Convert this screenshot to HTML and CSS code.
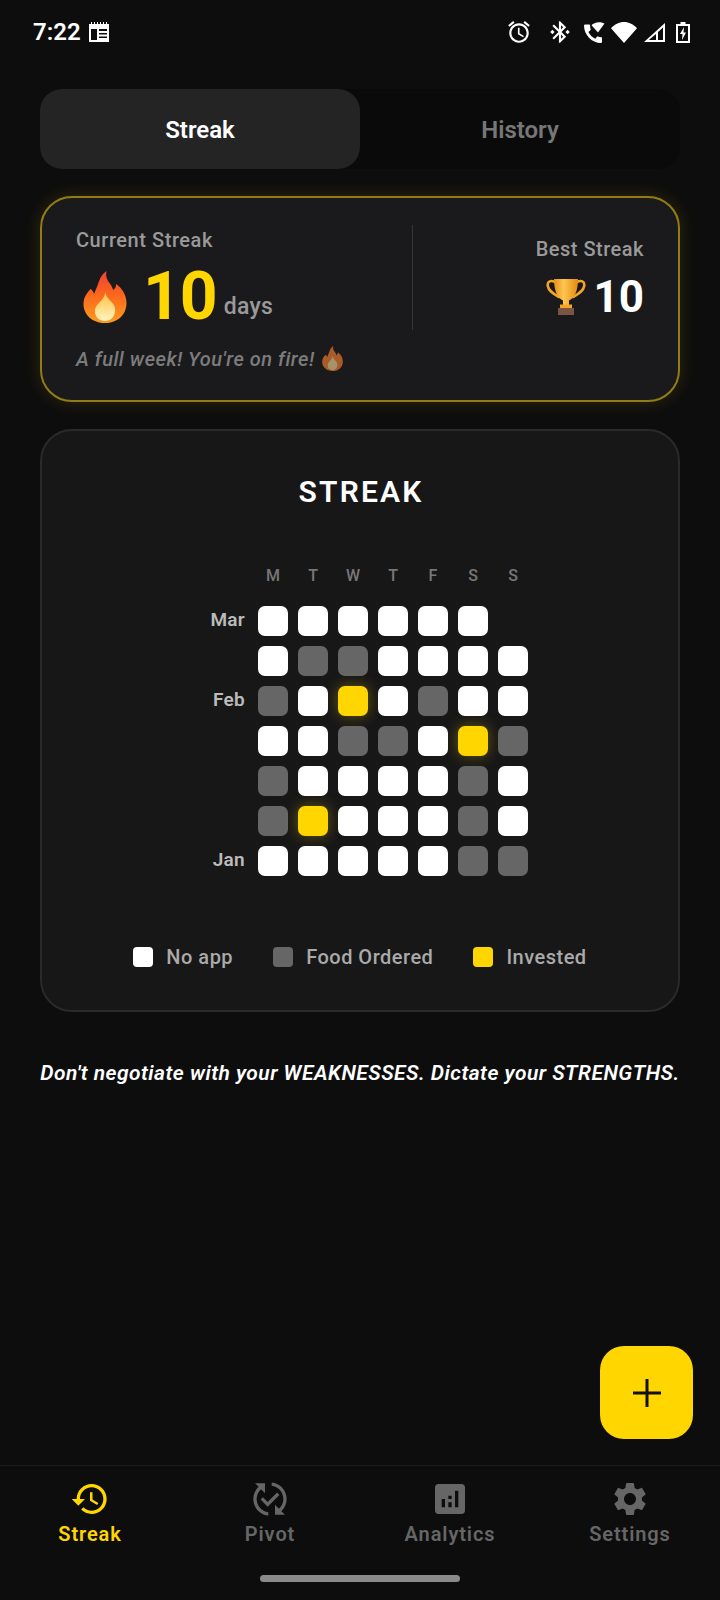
FILE: index.html
```html
<!DOCTYPE html>
<html lang="en">
<head>
<meta charset="utf-8">
<title>Streak</title>
<link rel="stylesheet" href="styles.css">
</head>
<body>
<div class="app">
  <header class="status">
    <div class="status-left">
      <span class="time">7:22</span>
      <svg class="cal" viewBox="0 0 22 20"><path fill="#fff" d="M1 2h2V0h1v2h2V0h1v2h2V0h1v2h2V0h1v2h2V0h1v2h2V0h1v2h2v18H1zM3 7v11h6V7zm8 0v2h8V7zm0 4v1.500h8V11zm0 3.500V16h8v-1.500z"/></svg>
    </div>
    <div class="status-right">
      <svg class="si si-alarm" viewBox="0 0 24 24"><path d="M22 5.720l-4.600-3.860-1.290 1.530 4.600 3.860L22 5.720zM7.880 3.390L6.600 1.860 2 5.710l1.290 1.530 4.590-3.850zM12.500 8H11v6l4.750 2.850.75-1.230-4-2.370V8zM12 4c-4.970 0-9 4.030-9 9s4.020 9 9 9c4.970 0 9-4.030 9-9s-4.030-9-9-9zm0 16c-3.870 0-7-3.130-7-7s3.130-7 7-7 7 3.130 7 7-3.130 7-7 7z"/></svg>
      <svg class="si si-bt" viewBox="0 0 24 24"><path d="M7 12l-2-2-2 2 2 2 2-2zm10.710-4.290L12 2h-1v7.590L6.410 5 5 6.410 10.590 12 5 17.590 6.410 19 11 14.410V22h1l5.710-5.710-4.300-4.290 4.300-4.290zM13 5.830l1.880 1.880L13 9.590V5.830zm1.880 10.460L13 18.170v-3.760l1.880 1.880zM19 10l-2 2 2 2 2-2-2-2z"/></svg>
      <svg class="si si-call" viewBox="0 0 24 24"><path d="M20.500 17.200c-1.300 0-2.500-.2-3.600-.6-.35-.12-.74-.03-1 .24l-1.600 1.900c-2.800-1.400-5.500-3.900-6.900-6.800l2-1.700c.27-.28.35-.67.24-1.020C9.300 8 9.100 6.800 9.100 5.500c0-.54-.45-1-1-1H4.600C4 4.500 3 4.700 3 5.500 3 14.800 10.700 23 20 23c.7 0 1-.6 1-1.200v-3.600c0-.55-.45-1-.5-1z"/><path d="M10.500 5.200C13 2.500 18 .8 23.500 3.500L17 12.500z"/></svg>
      <svg class="si si-wifi" viewBox="0 0 26 21"><path d="M13 21L0 6.200C3.500 2.500 8 0 13 0s9.500 2.500 13 6.200z"/></svg>
      <svg class="si si-signal" viewBox="0 0 21 19"><path d="M21 0L0 19h21zM19 4.500V17h-5V9z M12 11v6H4.800z"/></svg>
      <svg class="si si-batt" viewBox="0 0 14 21"><path fill-rule="evenodd" d="M4.500 0h5v2H14v19H0V2h4.500zM2 4v15h10V4zm6 1L4 12h2.500L6 18l4-7.500H7.500z"/></svg>
    </div>
  </header>

  <main class="main">
    <div class="tabs">
      <div class="tab tab-active">Streak</div>
      <div class="tab">History</div>
    </div>

    <section class="hero">
      <div class="hero-top">
        <div class="hero-left">
          <div class="hero-label">Current Streak</div>
          <div class="hero-count">
            <svg class="flame" viewBox="0 0 43 52">
              <defs>
                <linearGradient id="flameOuter" x1="0" y1="0" x2="0" y2="1">
                  <stop offset="0" stop-color="#ef4136"/>
                  <stop offset=".4" stop-color="#f9621f"/>
                  <stop offset="1" stop-color="#ff9c1c"/>
                </linearGradient>
                <linearGradient id="flameInner" x1="0" y1="0" x2="0" y2="1">
                  <stop offset="0" stop-color="#ffb93d"/>
                  <stop offset=".6" stop-color="#ffdf8a"/>
                  <stop offset="1" stop-color="#fff3c4"/>
                </linearGradient>
              </defs>
              <path fill="url(#flameOuter)" d="M23 0c-1 5 .5 9 3 12 1.500 2 3 4 3.500 7 2-1 3-3 3.200-6C38.500 17 43 24 43 32c0 12-9 20-21.500 20S0 44 0 33c0-7 3.500-11 7-15 2 1 3 3 3.500 5C13 17 15 12 16 9c1.500-4 4-7 7-9z"/>
              <path fill="url(#flameInner)" d="M22 20c0 5 2.500 7.500 6 11 3 3 4 6 3.500 9.500C31 46 27 50 21.500 50S12 46.500 11.500 41c-.3-3.500 1-6 3.500-8.500 3-3 6.500-6.500 7-12.500z"/>
            </svg>
            <span class="count-num">10</span>
            <span class="count-unit">days</span>
          </div>
        </div>
        <div class="hero-divider"></div>
        <div class="hero-right">
          <div class="best-label">Best Streak</div>
          <div class="best-count">
            <svg class="trophy" viewBox="0 0 40 38">
              <defs>
                <linearGradient id="cup" x1="0" y1="0" x2="1" y2="0">
                  <stop offset="0" stop-color="#e8911a"/>
                  <stop offset=".4" stop-color="#ffc650"/>
                  <stop offset="1" stop-color="#e48a14"/>
                </linearGradient>
              </defs>
              <path fill="none" stroke="#f2a527" stroke-width="2.600" stroke-linecap="round" d="M9 4C5 2 1 3 1.800 8c.7 5 6 8 11 11M31 4c4-2 8-1 7.200 4-.7 5-6 8-11 11"/>
              <path fill="url(#cup)" d="M8 1h24c0 11-3 19-9 21.500V27h-6v-4.500C11 20 8 12 8 1z"/>
              <path fill="#f2a527" d="M14 26.500h12V30H14z"/>
              <path fill="#7b5544" d="M12 30h16v7H12z"/>
            </svg>
            <span class="best-num">10</span>
          </div>
        </div>
      </div>
      <p class="hero-note">A full week! You're on fire! <svg class="flame-small" viewBox="0 0 43 52"><path fill="#a85c2a" d="M23 0c-1 5 .5 9 3 12 1.500 2 3 4 3.500 7 2-1 3-3 3.200-6C38.500 17 43 24 43 32c0 12-9 20-21.500 20S0 44 0 33c0-7 3.500-11 7-15 2 1 3 3 3.500 5C13 17 15 12 16 9c1.500-4 4-7 7-9z"/><path fill="#a8926a" d="M22 20c0 5 2.500 7.500 6 11 3 3 4 6 3.500 9.500C31 46 27 50 21.500 50S12 46.500 11.500 41c-.3-3.500 1-6 3.500-8.500 3-3 6.500-6.500 7-12.500z"/></svg></p>
    </section>

    <section class="panel">
      <h2 class="panel-title">STREAK</h2>
      <div class="grid">
        <span></span><span class="day">M</span><span class="day">T</span><span class="day">W</span><span class="day">T</span><span class="day">F</span><span class="day">S</span><span class="day">S</span>

        <span class="month">Mar</span><i class="c w"></i><i class="c w"></i><i class="c w"></i><i class="c w"></i><i class="c w"></i><i class="c w"></i><i class="c"></i>
        <span class="month"></span><i class="c w"></i><i class="c g"></i><i class="c g"></i><i class="c w"></i><i class="c w"></i><i class="c w"></i><i class="c w"></i>
        <span class="month">Feb</span><i class="c g"></i><i class="c w"></i><i class="c y"></i><i class="c w"></i><i class="c g"></i><i class="c w"></i><i class="c w"></i>
        <span class="month"></span><i class="c w"></i><i class="c w"></i><i class="c g"></i><i class="c g"></i><i class="c w"></i><i class="c y"></i><i class="c g"></i>
        <span class="month"></span><i class="c g"></i><i class="c w"></i><i class="c w"></i><i class="c w"></i><i class="c w"></i><i class="c g"></i><i class="c w"></i>
        <span class="month"></span><i class="c g"></i><i class="c y"></i><i class="c w"></i><i class="c w"></i><i class="c w"></i><i class="c g"></i><i class="c w"></i>
        <span class="month">Jan</span><i class="c w"></i><i class="c w"></i><i class="c w"></i><i class="c w"></i><i class="c w"></i><i class="c g"></i><i class="c g"></i>
      </div>
      <div class="legend">
        <div class="legend-item"><i class="swatch w"></i>No app</div>
        <div class="legend-item"><i class="swatch g"></i>Food Ordered</div>
        <div class="legend-item"><i class="swatch y"></i>Invested</div>
      </div>
    </section>

    <p class="quote">Don't negotiate with your WEAKNESSES. Dictate your STRENGTHS.</p>
  </main>

  <button class="fab" type="button" aria-label="Add">
    <svg viewBox="0 0 32 32"><path d="M14.500 2h3v12.500H30v3H17.500V30h-3V17.500H2v-3h12.500z"/></svg>
  </button>

  <nav class="nav">
    <div class="nav-item nav-active">
      <svg class="nav-icon" viewBox="0 0 24 24"><path d="M13 3c-4.970 0-9 4.030-9 9H1l3.890 3.890.07.140L9 12H6c0-3.870 3.130-7 7-7s7 3.130 7 7-3.130 7-7 7c-1.930 0-3.680-.790-4.940-2.060l-1.420 1.420C8.270 19.990 10.510 21 13 21c4.970 0 9-4.030 9-9s-4.030-9-9-9zm-1 5v5l4.280 2.540.72-1.210-3.500-2.080V8H12z"/></svg>
      <span>Streak</span>
    </div>
    <div class="nav-item">
      <svg class="nav-icon" viewBox="0 0 24 24"><path d="M17.660 9.530l-7.070 7.070-4.240-4.240 1.410-1.410 2.830 2.830 5.660-5.660 1.410 1.410zM4 12c0-2.330 1.020-4.420 2.620-5.880L9 8.500v-6H3l2.200 2.200C3.240 6.520 2 9.110 2 12c0 5.190 3.950 9.450 9 9.950v-2.020c-3.940-.490-7-3.860-7-7.930zm18 0c0-5.190-3.950-9.450-9-9.950v2.020c3.940.490 7 3.860 7 7.930 0 2.330-1.020 4.420-2.620 5.880L15 15.500v6h6l-2.200-2.200c1.960-1.820 3.200-4.410 3.200-7.300z"/></svg>
      <span>Pivot</span>
    </div>
    <div class="nav-item">
      <svg class="nav-icon" viewBox="0 0 24 24"><path d="M19 3H5c-1.100 0-2 .9-2 2v14c0 1.100.9 2 2 2h14c1.100 0 2-.9 2-2V5c0-1.100-.9-2-2-2zM9 17H7v-5h2v5zm4 0h-2v-3h2v3zm0-5h-2v-2h2v2zm4 5h-2V7h2v10z"/></svg>
      <span>Analytics</span>
    </div>
    <div class="nav-item">
      <svg class="nav-icon" viewBox="0 0 24 24"><path d="M19.140 12.940c.04-.3.060-.610.060-.940 0-.320-.020-.640-.070-.940l2.030-1.580c.180-.140.230-.410.120-.610l-1.920-3.320c-.120-.220-.370-.290-.590-.220l-2.390.960c-.5-.380-1.030-.7-1.620-.940l-.360-2.540c-.040-.240-.240-.410-.480-.410h-3.840c-.240 0-.430.170-.47.410l-.360 2.540c-.590.240-1.130.570-1.620.940l-2.390-.960c-.220-.080-.470 0-.590.220L2.740 8.870c-.120.210-.080.470.120.610l2.030 1.580c-.050.3-.090.630-.090.940s.020.640.07.940l-2.030 1.580c-.180.140-.230.410-.120.610l1.920 3.320c.120.220.370.290.590.220l2.390-.960c.5.380 1.030.7 1.620.940l.36 2.540c.050.240.240.410.480.410h3.840c.240 0 .440-.170.470-.41l.36-2.540c.590-.240 1.130-.560 1.620-.94l2.390.96c.22.08.47 0 .59-.22l1.920-3.32c.12-.22.07-.47-.12-.61l-2.010-1.58zM12 15.600c-1.98 0-3.60-1.62-3.60-3.60s1.62-3.60 3.60-3.60 3.60 1.62 3.60 3.60-1.62 3.60-3.60 3.60z"/></svg>
      <span>Settings</span>
    </div>
  </nav>
  <div class="home-wrap"><div class="home-bar"></div></div>
</div>
</body>
</html>
```

FILE: styles.css
```css
* { box-sizing: border-box; }
html, body { margin: 0; padding: 0; background: #0d0d0d; }
body { font-family: Roboto, "Liberation Sans", sans-serif; color: #fff; }
.app { position: relative; width: 720px; height: 1600px; overflow: hidden; display: flex; flex-direction: column; background: #0d0d0d; }

.status { height: 89px; flex: none; display: flex; justify-content: space-between; align-items: flex-start; padding: 20px 30px 0 33px; }
.status-left { display: flex; align-items: center; gap: 7px; height: 24px; }
.time { font-size: 24px; font-weight: 600; line-height: 24px; }
.cal { width: 22px; height: 20px; }
.status-right { display: flex; align-items: center; height: 24px; }
.si { fill: #fff; display: block; }
.si-alarm { width: 26px; height: 26px; margin-right: 15px; }
.si-bt { width: 26px; height: 26px; margin-right: 8px; }
.si-call { width: 24px; height: 24px; margin-right: 6px; }
.si-wifi { width: 26px; height: 21px; margin-right: 7px; }
.si-signal { width: 21px; height: 19px; margin-right: 11px; }
.si-batt { width: 14px; height: 21px; }

.main { flex: 1; padding: 0 40px; display: flex; flex-direction: column; min-height: 0; }
.tabs { display: flex; height: 80px; background: #0a0a0a; border-radius: 22px; flex: none; }
.tab { flex: 1; display: flex; align-items: center; justify-content: center; padding-top: 2px; font-size: 24px; font-weight: 600; color: #777; border-radius: 22px; }
.tab-active { background: #242424; color: #fff; }

.hero { margin-top: 27px; height: 206px; flex: none; background: #1a1a1c; border: 2px solid #937c14; border-radius: 32px; padding: 27px 34px 0; box-shadow: 0 0 18px rgba(255, 214, 0, .14); }
.hero-top { display: flex; height: 105px; }
.hero-left { flex: 1; display: flex; flex-direction: column; }
.hero-label { font-size: 20px; font-weight: 500; line-height: 26px; color: #9a9a9a; letter-spacing: .55px; margin-top: 2px; }
.hero-count { display: flex; align-items: baseline; margin-top: 11px; }
.flame { width: 46px; height: 52px; margin-left: 6px; align-self: center; }
.count-num { font-size: 66px; font-weight: 700; line-height: 66px; color: #ffd600; margin-left: 15px; letter-spacing: -1px; }
.count-unit { align-self: flex-end; margin: 0 0 10px 7px; font-size: 23px; font-weight: 500; line-height: 26px; color: #9a9a9a; letter-spacing: .3px; }
.hero-divider { width: 1px; background: #353535; flex: none; }
.hero-right { width: 231px; flex: none; display: flex; flex-direction: column; align-items: flex-end; padding-top: 11px; }
.best-label { font-size: 20px; font-weight: 500; line-height: 26px; color: #9a9a9a; letter-spacing: .5px; }
.best-count { display: flex; align-items: center; margin-top: 10px; gap: 8px; }
.trophy { width: 40px; height: 38px; }
.best-num { font-size: 44px; font-weight: 700; line-height: 50px; }
.hero-note { margin: 16px 0 0; font-size: 20px; font-style: italic; font-weight: 500; line-height: 26px; color: #7c7c7c; letter-spacing: .5px; }
.flame-small { width: 21px; height: 25px; vertical-align: -5px; margin-left: 2px; }

.panel { margin-top: 27px; height: 583px; flex: none; background: #171717; border: 2px solid #2a2a2a; border-radius: 32px; display: flex; flex-direction: column; align-items: center; padding-top: 43px; }
.panel-title { margin: 0; font-size: 30px; font-weight: 600; line-height: 36px; letter-spacing: 2.200px; padding-left: 2px; }
.grid { margin-top: 53px; display: grid; grid-template-columns: 56px repeat(7, 30px); grid-template-rows: 33px; gap: 10px; grid-auto-rows: 30px; }
.day { font-size: 16px; font-weight: 500; color: #777; text-align: center; line-height: 26px; height: 20px; }
.month { font-size: 19px; font-weight: 600; color: #bbb; text-align: right; padding-right: 3px; line-height: 28px; letter-spacing: .3px; }
.c { display: block; width: 30px; height: 30px; border-radius: 7px; }
.w { background: #fff; }
.g { background: #666; }
.y { background: #ffd600; }
.c.y { box-shadow: 0 0 14px rgba(255, 214, 0, .35); }
.legend { margin-top: 71px; display: flex; gap: 40px; }
.legend-item { display: flex; align-items: center; gap: 13px; font-size: 20px; font-weight: 500; color: #aaa; letter-spacing: .5px; line-height: 20px; }
.swatch { display: block; width: 20px; height: 20px; border-radius: 4px; }

.quote { margin: 48px 0 0; font-size: 21px; font-style: italic; font-weight: 600; text-align: center; line-height: 26px; letter-spacing: .47px; white-space: nowrap; }

.fab { position: absolute; left: 600px; top: 1346px; width: 93px; height: 93px; border: 0; border-radius: 24px; background: #ffd600; display: flex; align-items: center; justify-content: center; padding: 0; }
.fab svg { width: 32px; height: 32px; fill: #111; }

.nav { flex: none; height: 100px; border-top: 1px solid #1c1c1c; display: grid; grid-template-columns: repeat(4, 180px); padding-top: 13px; }
.nav-item { display: flex; flex-direction: column; align-items: center; color: #666; font-size: 20px; font-weight: 600; line-height: 24px; letter-spacing: .9px; }
.nav-icon { width: 40px; height: 40px; fill: currentColor; display: block; margin-bottom: 3px; }
.nav-active { color: #ffd600; }
.home-wrap { flex: none; height: 35px; display: flex; justify-content: center; padding-top: 10px; }
.home-bar { width: 200px; height: 7px; border-radius: 4px; background: #8a8a8a; }
```
